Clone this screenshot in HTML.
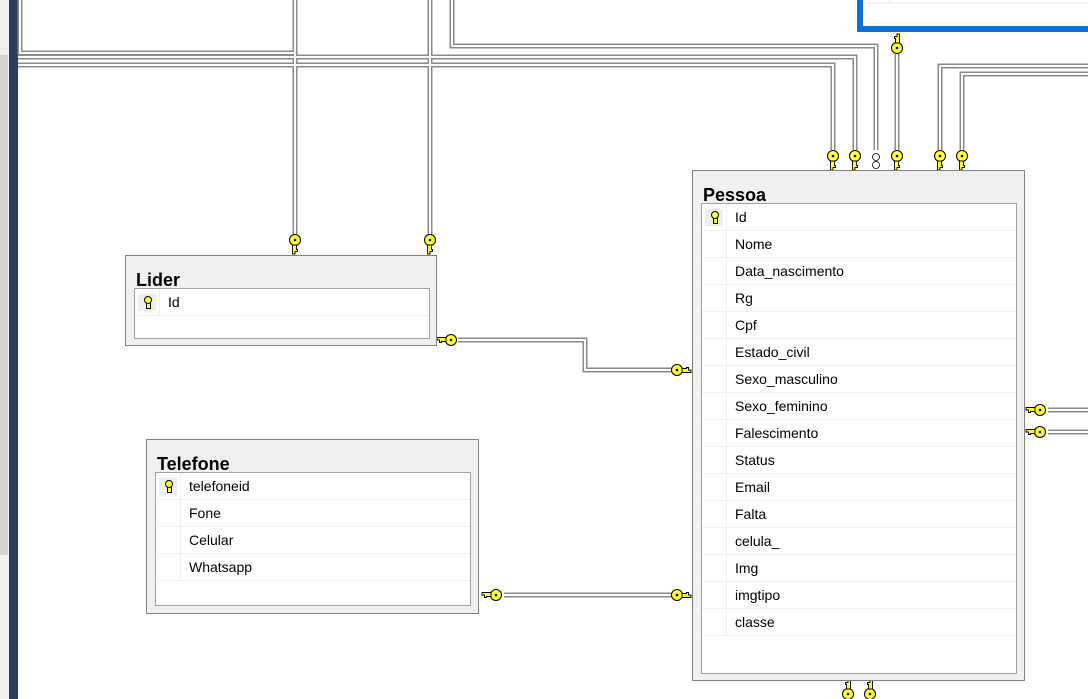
<!DOCTYPE html>
<html><head><meta charset="utf-8"><style>
body{margin:0;width:1088px;height:699px;overflow:hidden;background:#fff;font-family:"Liberation Sans",sans-serif;position:relative}
.tb{position:absolute;background:#f0f0f0;border:1px solid #808080;box-sizing:border-box}
.tt{position:absolute;left:10px;font-weight:bold;font-size:18px;color:#000}
.in{position:absolute;background:#fff;border:1px solid #a0a0a0;box-sizing:border-box}
.r{height:27px;border-bottom:1px solid #f0f0f0;box-sizing:border-box;position:relative;font-size:14px;color:#000;line-height:26px}
.r span{position:absolute;left:33px}
.r i{position:absolute;left:0;top:0;width:25px;height:27px;border-right:1px solid #f0f0f0;box-sizing:border-box}
.k{position:absolute;left:3px;top:5px;width:18px;height:17px;background:#eee}
.k::after{content:"";position:absolute;left:6px;top:2px;width:6px;height:6px;border-radius:50%;background:#ffff33;border:1px solid #000}
.k::before{content:"";position:absolute;left:8px;top:9px;width:3px;height:5px;background:#ffff33;border:1px solid #000;border-top:none}
</style></head><body>
<svg width="1088" height="699" style="position:absolute;left:0;top:0">
<defs>
<g id="kd"><circle cx="0" cy="-5" r="5.5" fill="#ffff33" stroke="#000" stroke-width="1"/><circle cx="0" cy="-5" r="1.3" fill="#000"/><path d="M-2.5,0 v9 h2.5 v-2.5 h2.5 v-2 h-1 v-4.5z" fill="#ffff33" stroke="#000" stroke-width="0.9"/></g>
<path id="ln" d="M20,0 V53 H295 M295,0 V238 M430,0 V238 M18,57 H855 V150 M18,65 H833 V150 M452,0 V46 H876 V150 M897,54 V150 M940,150 V66 H1088 M962,150 V74 H1088 M458,340 H585 V370 H672 M504,595 H672 M1048,410 H1088 M1048,432 H1088"/>
</defs>
<rect x="0" y="0" width="9" height="699" fill="#f0f0f0"/>
<rect x="0" y="55" width="8" height="500" fill="#d4d4d4"/>
<rect x="9" y="0" width="9" height="699" fill="#2b3d5c"/>
<use href="#ln" fill="none" stroke="#8a8a8a" stroke-width="5"/>
<use href="#ln" fill="none" stroke="#fff" stroke-width="2"/>
<rect x="860" y="-10" width="240" height="39" fill="#fff" stroke="#0a70d2" stroke-width="6"/>
<line x1="866" y1="3" x2="1088" y2="3" stroke="#e8e8e8"/>
<line x1="890" y1="0" x2="890" y2="3" stroke="#e8e8e8"/>
<use href="#kd" transform="translate(295,245)"/>
<use href="#kd" transform="translate(430,245)"/>
<use href="#kd" transform="translate(833,161)"/>
<use href="#kd" transform="translate(855,161)"/>
<use href="#kd" transform="translate(897,161)"/>
<use href="#kd" transform="translate(940,161)"/>
<use href="#kd" transform="translate(962,161)"/>
<use href="#kd" transform="translate(897,43) rotate(180)"/>
<use href="#kd" transform="translate(848,689) rotate(180)"/>
<use href="#kd" transform="translate(870,689) rotate(180)"/>
<use href="#kd" transform="translate(446,340) rotate(90)"/>
<use href="#kd" transform="translate(491,595) rotate(90)"/>
<use href="#kd" transform="translate(682,370) rotate(-90)"/>
<use href="#kd" transform="translate(682,595) rotate(-90)"/>
<use href="#kd" transform="translate(1035,410) rotate(90)"/>
<use href="#kd" transform="translate(1035,432) rotate(90)"/>
<circle cx="876" cy="157" r="3.5" fill="#fff" stroke="#000" stroke-width="0.8"/>
<circle cx="876" cy="165" r="3.5" fill="#fff" stroke="#000" stroke-width="0.8"/>
</svg>

<div class="tb" style="left:125px;top:255px;width:312px;height:91px">
<div class="tt" style="top:14px">Lider</div>
<div class="in" style="left:8px;top:32px;width:296px;height:51px">
<div class="r"><i><b class="k"></b></i><span>Id</span></div>
</div></div>

<div class="tb" style="left:146px;top:439px;width:333px;height:175px">
<div class="tt" style="top:14px">Telefone</div>
<div class="in" style="left:8px;top:32px;width:316px;height:134px">
<div class="r"><i><b class="k"></b></i><span>telefoneid</span></div>
<div class="r"><i></i><span>Fone</span></div>
<div class="r"><i></i><span>Celular</span></div>
<div class="r"><i></i><span>Whatsapp</span></div>
</div></div>

<div class="tb" style="left:692px;top:170px;width:333px;height:511px">
<div class="tt" style="top:14px">Pessoa</div>
<div class="in" style="left:8px;top:32px;width:316px;height:471px">
<div class="r"><i><b class="k"></b></i><span>Id</span></div>
<div class="r"><i></i><span>Nome</span></div>
<div class="r"><i></i><span>Data_nascimento</span></div>
<div class="r"><i></i><span>Rg</span></div>
<div class="r"><i></i><span>Cpf</span></div>
<div class="r"><i></i><span>Estado_civil</span></div>
<div class="r"><i></i><span>Sexo_masculino</span></div>
<div class="r"><i></i><span>Sexo_feminino</span></div>
<div class="r"><i></i><span>Falescimento</span></div>
<div class="r"><i></i><span>Status</span></div>
<div class="r"><i></i><span>Email</span></div>
<div class="r"><i></i><span>Falta</span></div>
<div class="r"><i></i><span>celula_</span></div>
<div class="r"><i></i><span>Img</span></div>
<div class="r"><i></i><span>imgtipo</span></div>
<div class="r"><i></i><span>classe</span></div>
</div></div>
</body></html>
